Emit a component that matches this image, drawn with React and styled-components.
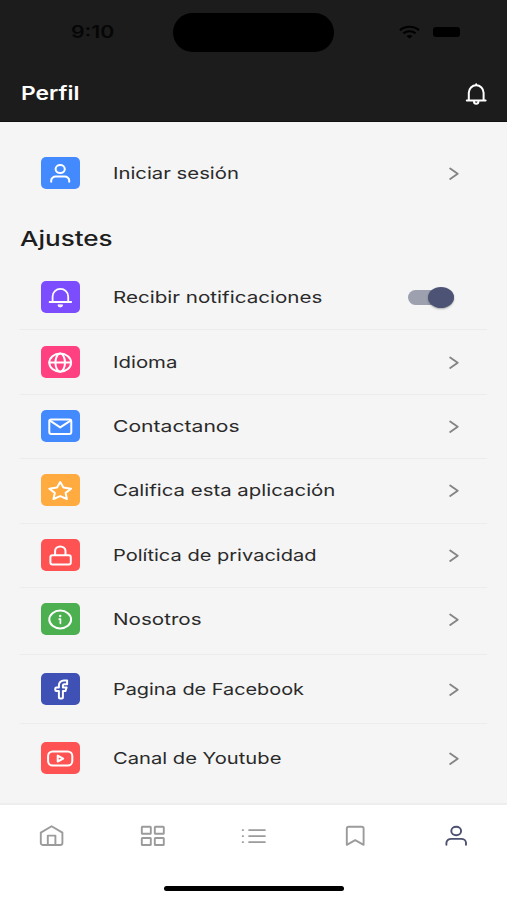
import React from "react"
import styled, { createGlobalStyle } from "styled-components"

const GlobalStyle = createGlobalStyle`
  * {
    box-sizing: border-box;
  }
  body {
    margin: 0;
    font-family: Inter, "Liberation Sans", sans-serif;
    background-color: #f5f5f5;
  }
`

const Screen = styled.div`
  display: flex;
  flex-direction: column;
  width: 507px;
  height: 900px;
  overflow: hidden;
  background-color: #f5f5f5;
`

const Header = styled.header`
  height: 122px;
  background-color: #1c1c1c;
  border-bottom: 1px solid #111;
`

const StatusBar = styled.div`
  display: grid;
  grid-template-columns: 173px 161px 1fr;
  align-items: center;
  height: 64px;
`

const Time = styled.div`
  padding-left: 71px;
  font-size: 17px;
  line-height: 20px;
  font-weight: 600;
  color: #060606;
`

const Island = styled.div`
  height: 39px;
  border-radius: 20px;
  background-color: #000;
`

const StatusIcons = styled.div`
  display: flex;
  align-items: center;
  padding-left: 65px;
  gap: 13px;
`

const Battery = styled.div`
  width: 27px;
  height: 10px;
  border-radius: 3px;
  background-color: #000;
`

const TitleBar = styled.div`
  display: flex;
  align-items: center;
  justify-content: space-between;
  height: 58px;
  padding: 1px 19px 0 21px;
`

const Title = styled.h1`
  margin: 0;
  font-size: 19px;
  line-height: 24px;
  font-weight: 600;
  color: #fff;
`

const Wide = styled.span`
  display: inline-block;
  white-space: nowrap;
  transform: scaleX(${({ $stretch }) => $stretch});
  transform-origin: 0 50%;
`

const Content = styled.main`
  flex: 1;
  padding: 19px 20px 0;
`

const SectionTitle = styled.h2`
  margin: 18px 0 9.6px;
  font-size: 20.5px;
  line-height: 32px;
  font-weight: 500;
  color: #1e1e1e;
`

const List = styled.ul`
  margin: 0;
  padding: 0;
  list-style: none;
`

const Row = styled.li`
  display: flex;
  align-items: center;
  height: ${({ $tall, $spaced }) => ($tall ? "69.5px" : $spaced ? "66.9px" : "64.4px")};
  padding: 0 27px ${({ $spaced }) => ($spaced ? "2.5px" : 0)} 21px;
  box-shadow: ${({ $divided }) => ($divided ? "0 1px 0 #ececec" : "none")};
`

const Tile = styled.div`
  width: 39px;
  height: 32px;
  border-radius: 5px;
  color: #fff;
  background-color: ${({ $color }) => $color};
`

const Label = styled.div`
  flex: 1;
  margin-left: 33px;
  font-size: 16.5px;
  line-height: 24px;
  color: #2a2a2a;
`

const Switch = styled.div`
  display: flex;
  align-items: center;
  justify-content: flex-end;
  width: 46px;
  height: 15px;
  margin-right: 6px;
  border-radius: 8px;
  background-color: #9da0ae;
`

const Knob = styled.div`
  flex: none;
  width: 26px;
  height: 21px;
  border-radius: 50%;
  background-color: #4d5374;
  box-shadow: 0 1px 2px rgba(0, 0, 0, 0.3);
`

const Chevron = styled.div`
  margin-right: -1px;
  color: #858585;
`

const Footer = styled.footer`
  height: 97px;
  border-top: 2px solid #eee;
  background-color: #fff;
`

const Tabs = styled.nav`
  display: grid;
  grid-template-columns: repeat(5, 1fr);
  height: 81px;
  padding-top: 16px;
  justify-items: center;
`

const Tab = styled.div`
  height: 30px;
  color: ${({ $active }) => ($active ? "#4d5070" : "#9b9b9b")};
`

const HomeIndicator = styled.div`
  width: 180px;
  height: 5px;
  margin: 0 auto;
  border-radius: 3px;
  background-color: #000;
`

const Svg = styled.svg`
  display: block;
  fill: none;
  stroke: currentColor;
  stroke-linecap: round;
  stroke-linejoin: round;
`

const BellButton = styled.div`
  color: #fff;
`

const Icon = ({ width = 39, height = 32, stroke = 2, children }) => (
  <Svg width={width} height={height} viewBox={`0 0 ${width} ${height}`} strokeWidth={stroke}>
    {children}
  </Svg>
)

const icons = {
  user: (
    <>
      <ellipse cx="19.2" cy="12.1" rx="4.6" ry="4" />
      <path d="M10.2 24.8v-1.4a4.6 3.8 0 0 1 4.6-3.8h8.8a4.6 3.8 0 0 1 4.6 3.8v1.4" />
    </>
  ),
  bell: (
    <>
      <path d="M8.6 21h21.6M11.6 21v-5.6a7.8 7.5 0 0 1 15.6 0V21" strokeWidth="1.8" />
      <path d="M17 24.3a2.3 1.6 0 0 0 4.6 0z" fill="currentColor" strokeWidth="1" />
    </>
  ),
  globe: (
    <>
      <ellipse cx="19.2" cy="16.6" rx="10.9" ry="9.1" />
      <ellipse cx="19.2" cy="16.6" rx="4.8" ry="9.1" />
      <path d="M8.3 16.6h21.8" />
    </>
  ),
  mail: (
    <>
      <rect x="8.3" y="9.4" width="22" height="14.6" rx="2" />
      <path d="M8.6 10.4l10.6 7 10.8-7" />
    </>
  ),
  star: <path d="M19.2 8l3.2 5.6 7.7 1.1-5.5 4.2 1.3 6.1-6.7-2.9-6.7 2.9 1.3-6.1-5.5-4.2 7.7-1.1z" />,
  lock: (
    <>
      <rect x="9.4" y="16.2" width="20.4" height="9.4" rx="2" />
      <path d="M14.1 16v-4a5.2 4.5 0 0 1 10.4 0v4" />
    </>
  ),
  info: (
    <>
      <ellipse cx="19.2" cy="16.5" rx="10.9" ry="8.9" />
      <path d="M18.2 16.1h1.2v4.2" strokeWidth="1.7" />
      <circle cx="19.2" cy="13" r="1.2" fill="currentColor" stroke="none" />
    </>
  ),
  facebook: (
    <path d="M26.1 7.4h-3a5.1 4.7 0 0 0-5.2 4.8v2.3h-2.6a1 1 0 0 0-1 1v1.6a1 1 0 0 0 1 1h2.6v6.4a1 1 0 0 0 1 1h2a1 1 0 0 0 1-1v-6.4h2.5l1.2-3.6h-3.7v-2a1.4 1.3 0 0 1 1.4-1.3h2.8z" />
  ),
  youtube: (
    <>
      <rect x="7.1" y="9.5" width="24.2" height="14" rx="4.5" />
      <path d="M16.7 13.6v5.9l5.5-2.95z" />
    </>
  ),
}

const tabs = {
  home: (
    <>
      <path d="M4.8 11.6l10.8-6.4 10.8 6.4V22a2.2 2 0 0 1-2.2 2H7a2.2 2 0 0 1-2.2-2z" />
      <path d="M11.8 24v-9.4h7.6V24" />
    </>
  ),
  grid: (
    <>
      <rect x="4.8" y="5.8" width="9" height="7" rx="0.6" />
      <rect x="17.8" y="5.8" width="9" height="7" rx="0.6" />
      <rect x="4.8" y="17" width="9" height="7" rx="0.6" />
      <rect x="17.8" y="17" width="9" height="7" rx="0.6" />
    </>
  ),
  list: (
    <>
      <path d="M11 9.1h16M11 15.1h16M11 21.1h16" strokeWidth="1.7" />
      <path d="M4.6 9.1h.6M4.6 15.1h.6M4.6 21.1h.6" strokeWidth="1.7" />
    </>
  ),
  bookmark: <path d="M6.8 23.8V7.4a1.9 1.6 0 0 1 1.9-1.6h13a1.9 1.6 0 0 1 1.9 1.6v16.4l-8.4-4.6z" />,
  user: (
    <>
      <ellipse cx="15.2" cy="10" rx="4.9" ry="4.2" />
      <path d="M5.4 23.8v-1.8a4.9 4.1 0 0 1 4.9-4.1h9.8a4.9 4.1 0 0 1 4.9 4.1v1.8" />
    </>
  ),
}

const settings = [
  { label: "Recibir notificaciones", icon: "bell", color: "#7c4dff", stretch: 1.248, toggle: true },
  { label: "Idioma", icon: "globe", color: "#ff4081", stretch: 1.235 },
  { label: "Contactanos", icon: "mail", color: "#448aff", stretch: 1.28 },
  { label: "Califica esta aplicación", icon: "star", color: "#ffab40", stretch: 1.236 },
  { label: "Política de privacidad", icon: "lock", color: "#ff5252", stretch: 1.215 },
  { label: "Nosotros", icon: "info", color: "#4caf50", stretch: 1.25, spaced: true },
  { label: "Pagina de Facebook", icon: "facebook", color: "#3f51b5", stretch: 1.205, tall: true },
  { label: "Canal de Youtube", icon: "youtube", color: "#ff5252", stretch: 1.222, tall: true, last: true },
]

const SettingRow = ({ label, icon, color, stretch, toggle, tall, spaced, last }) => (
  <Row $tall={tall} $spaced={spaced} $divided={!last}>
    <Tile $color={color}>
      <Icon>{icons[icon]}</Icon>
    </Tile>
    <Label>
      <Wide $stretch={stretch}>{label}</Wide>
    </Label>
    {toggle ? (
      <Switch>
        <Knob />
      </Switch>
    ) : (
      <Chevron>
        <Icon width={16} height={16} stroke={1.9}>
          <path d="M5.200 3.500l7.500 5.200-7.500 5.300" />
        </Icon>
      </Chevron>
    )}
  </Row>
)

const App = () => {
  return (
    <Screen>
      <GlobalStyle />
      <Header>
        <StatusBar>
          <Time>
            <Wide $stretch={1.25}>9:10</Wide>
          </Time>
          <Island />
          <StatusIcons>
            <svg width="21" height="15" viewBox="0 0 21 15" fill="none" stroke="#000" strokeWidth="2.2">
              <path d="M1 5.2C6.2 0.6 14.800 0.6 20 5.2" />
              <path d="M4.4 8.4c3.4-2.9 8.8-2.9 12.2 0" />
              <path d="M7.5 11c1.7-1.3 4.3-1.3 6 0l-3 2.6z" fill="#000" stroke="none" />
            </svg>
            <Battery />
          </StatusIcons>
        </StatusBar>
        <TitleBar>
          <Title>
            <Wide $stretch={1.2}>Perfil</Wide>
          </Title>
          <BellButton>
            <Icon width={24} height={24} stroke={2}>
              <path d="M2.8 18.6h18.8M4.8 18.400v-7.6a7.400 7.500 0 0 1 14.800 0v7.600M12.200 3.200V2.200" />
              <path d="M10 19.600a2.200 2.200 0 0 0 4.400 0" />
            </Icon>
          </BellButton>
        </TitleBar>
      </Header>
      <Content>
        <List>
          <SettingRow label="Iniciar sesión" icon="user" color="#448aff" stretch={1.23} last />
        </List>
        <SectionTitle>
          <Wide $stretch={1.27}>Ajustes</Wide>
        </SectionTitle>
        <List>
          {settings.map(item => (
            <SettingRow key={item.label} {...item} />
          ))}
        </List>
      </Content>
      <Footer>
        <Tabs>
          {Object.keys(tabs).map(name => (
            <Tab key={name} $active={name === "user"}>
              <Icon width={30} height={30} stroke={1.9}>
                {tabs[name]}
              </Icon>
            </Tab>
          ))}
        </Tabs>
        <HomeIndicator />
      </Footer>
    </Screen>
  )
}

export default App
